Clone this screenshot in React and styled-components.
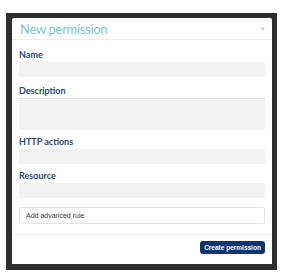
import styled, { createGlobalStyle } from 'styled-components'

const GlobalStyle = createGlobalStyle`
  html, body {
    margin: 0;
    padding: 0;
    background: #ffffff;
  }
`

const Frame = styled.div`
  margin: 13px 0 0 6px;
  width: 271px;
  height: 257px;
  box-sizing: border-box;
  padding: 5px 5px 6px 6px;
  background: #2e2e2e;
`

const Modal = styled.div`
  width: 260px;
  height: 246px;
  background: #ffffff;
  border-radius: 2px 2px 0 0;
  display: flex;
  flex-direction: column;
`

const Header = styled.div`
  height: 22px;
  box-sizing: border-box;
  border-bottom: 1px solid #ececec;
  display: flex;
  align-items: center;
  justify-content: space-between;
  padding: 0 7px 0 8px;
`

const Title = styled.h3`
  margin: 0;
  font-family: Lato, "Open Sans", sans-serif;
  font-weight: 400;
  font-size: 13px;
  line-height: 16px;
  color: #76c8d5;
  letter-spacing: -0.3px;
`

const Close = styled.span`
  font-family: "Liberation Sans", Arial, sans-serif;
  font-weight: 700;
  font-size: 8px;
  line-height: 8px;
  color: #c8c8c8;
  margin-top: 1px;
`

const Body = styled.div`
  padding: 9px 7px 10px 7px;
  display: flex;
  flex-direction: column;
  border-bottom: 1px solid #ececec;
`

const Field = styled.div`
  display: flex;
  flex-direction: column;
  margin-bottom: ${p => p.$gap}px;
`

const Label = styled.label`
  font-family: Lato, "Open Sans", sans-serif;
  font-weight: 700;
  font-size: 9px;
  line-height: 11px;
  color: #26477d;
  margin-bottom: 2px;
`

const Input = styled.div`
  height: ${p => p.$h}px;
  background: #f2f2f2;
  box-sizing: border-box;
  border-top: ${p => (p.$area ? '1px solid #dcdcdc' : 'none')};
`

const RuleBox = styled.div`
  height: 17px;
  box-sizing: border-box;
  border: 1px solid #e6e6e6;
  border-radius: 2px;
  display: flex;
  align-items: center;
  padding-left: 6px;
  font-family: "Liberation Sans", Arial, sans-serif;
  font-size: 7px;
  color: #333333;
`

const Footer = styled.div`
  display: flex;
  justify-content: flex-end;
  padding: 6px 7px 0 0;
`

const Button = styled.button`
  width: 65px;
  height: 13px;
  padding: 0;
  border: none;
  border-radius: 3px;
  background: #0e3470;
  color: #ffffff;
  font-family: "Liberation Sans", Arial, sans-serif;
  font-size: 6.5px;
  font-weight: 700;
`

const fields = [
  { label: 'Name', h: 15, gap: 8 },
  { label: 'Description', h: 32, gap: 6, area: true },
  { label: 'HTTP actions', h: 15, gap: 6 },
  { label: 'Resource', h: 15, gap: 9 },
]

export default function App() {
  return (
    <>
      <GlobalStyle />
      <Frame>
        <Modal>
          <Header>
            <Title>New permission</Title>
            <Close>×</Close>
          </Header>
          <Body>
            {fields.map(f => (
              <Field key={f.label} $gap={f.gap}>
                <Label>{f.label}</Label>
                <Input $h={f.h} $area={f.area} />
              </Field>
            ))}
            <RuleBox>Add advanced rule</RuleBox>
          </Body>
          <Footer>
            <Button>Create permission</Button>
          </Footer>
        </Modal>
      </Frame>
    </>
  )
}
